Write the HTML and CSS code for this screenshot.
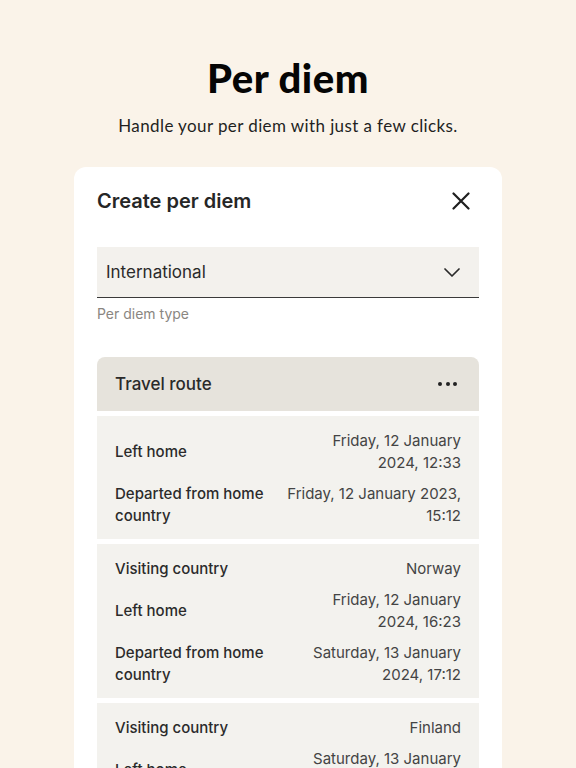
FILE: index.html
```html
<!DOCTYPE html>
<html lang="en">
<head>
<meta charset="utf-8">
<title>Per diem</title>
<link rel="stylesheet" href="styles.css">
</head>
<body>
<main class="page">
  <h1 class="title">Per diem</h1>
  <p class="subtitle">Handle your per diem with just a few clicks.</p>

  <section class="card">
    <div class="card-head">
      <h2 class="card-title">Create per diem</h2>
      <svg class="close" width="18" height="18" viewBox="0 0 18 18" aria-label="Close">
        <path d="M1.5 1.5 L16.5 16.5 M16.5 1.5 L1.5 16.5" stroke="#1f1f1f" stroke-width="2.2" stroke-linecap="round" fill="none"/>
      </svg>
    </div>

    <div class="select">
      <span class="select-value">International</span>
      <svg class="chevron" width="16" height="9" viewBox="0 0 16 9">
        <path d="M1 1 L8 8 L15 1" stroke="#2a2a2a" stroke-width="1.7" stroke-linecap="round" stroke-linejoin="round" fill="none"/>
      </svg>
    </div>
    <div class="helper">Per diem type</div>

    <div class="route">
      <div class="route-head">
        <span class="route-title">Travel route</span>
        <span class="dots"><i></i><i></i><i></i></span>
      </div>

      <div class="leg">
        <div class="row"><span class="label">Left home</span><span class="value">Friday, 12 January 2024,&nbsp;12:33</span></div>
        <div class="row"><span class="label">Departed from home country</span><span class="value">Friday, 12 January 2023, 15:12</span></div>
      </div>

      <div class="leg">
        <div class="row"><span class="label">Visiting country</span><span class="value">Norway</span></div>
        <div class="row"><span class="label">Left home</span><span class="value">Friday, 12 January 2024,&nbsp;16:23</span></div>
        <div class="row"><span class="label">Departed from home country</span><span class="value">Saturday, 13 January 2024,&nbsp;17:12</span></div>
      </div>

      <div class="leg">
        <div class="row"><span class="label">Visiting country</span><span class="value">Finland</span></div>
        <div class="row"><span class="label">Left home</span><span class="value">Saturday, 13 January 2024,&nbsp;18:05</span></div>
      </div>
    </div>
  </section>
</main>
</body>
</html>
```

FILE: styles.css
```css
* { box-sizing: border-box; }

html, body {
  margin: 0;
  padding: 0;
  height: 100%;
  overflow: hidden;
}

body {
  background: #faf3e9;
  font-family: Inter, "Noto Sans", sans-serif;
  color: #2a2a2a;
}

.page {
  display: flex;
  flex-direction: column;
  align-items: center;
  padding-top: 54px;
}

.title {
  margin: 0;
  font-family: Lato, "Noto Sans", sans-serif;
  font-weight: 900;
  font-size: 40px;
  line-height: 48px;
  color: #050505;
  letter-spacing: 0.5px;
}

.subtitle {
  margin: 12px 0 0;
  font-family: Lato, "Noto Sans", sans-serif;
  font-size: 17px;
  line-height: 24px;
  letter-spacing: 0.4px;
  color: #1f1f1f;
}

.card {
  margin-top: 29px;
  width: 428px;
  background: #ffffff;
  border-radius: 12px;
  padding: 20px 23px 40px;
}

.card-head {
  display: flex;
  align-items: center;
  justify-content: space-between;
}

.card-title {
  margin: 0;
  font-size: 20px;
  line-height: 28px;
  font-weight: 600;
  color: #262626;
}

.close {
  margin-right: 9px;
}

.select {
  margin-top: 32px;
  height: 51px;
  background: #f3f1ed;
  border-bottom: 1px solid #3a3a3a;
  display: flex;
  align-items: center;
  justify-content: space-between;
  padding: 0 19px 0 9px;
}

.select-value {
  font-size: 17px;
  color: #2a2a2a;
}

.helper {
  margin-top: 6px;
  font-size: 14px;
  line-height: 20px;
  color: #8a8681;
}

.route {
  margin-top: 33px;
  display: flex;
  flex-direction: column;
  gap: 5px;
}

.route-head {
  height: 54px;
  background: #e6e3dc;
  border-radius: 8px 8px 0 0;
  display: flex;
  align-items: center;
  justify-content: space-between;
  padding: 0 22px 0 18px;
}

.route-title {
  font-size: 17px;
  font-weight: 500;
  color: #2a2a2a;
}

.dots {
  display: flex;
  gap: 3.5px;
}

.dots i {
  display: block;
  width: 4px;
  height: 4px;
  border-radius: 50%;
  background: #222;
}

.leg {
  background: #f3f2ee;
  padding: 14px 18px 12px;
  display: flex;
  flex-direction: column;
  gap: 9px;
}

.row {
  display: flex;
  align-items: center;
  justify-content: space-between;
  gap: 10px;
  font-size: 15px;
  line-height: 22px;
}

.label {
  width: 160px;
  flex: none;
  font-weight: 500;
  color: #2b2b2b;
}

.value {
  text-align: right;
  color: #444;
}
```
